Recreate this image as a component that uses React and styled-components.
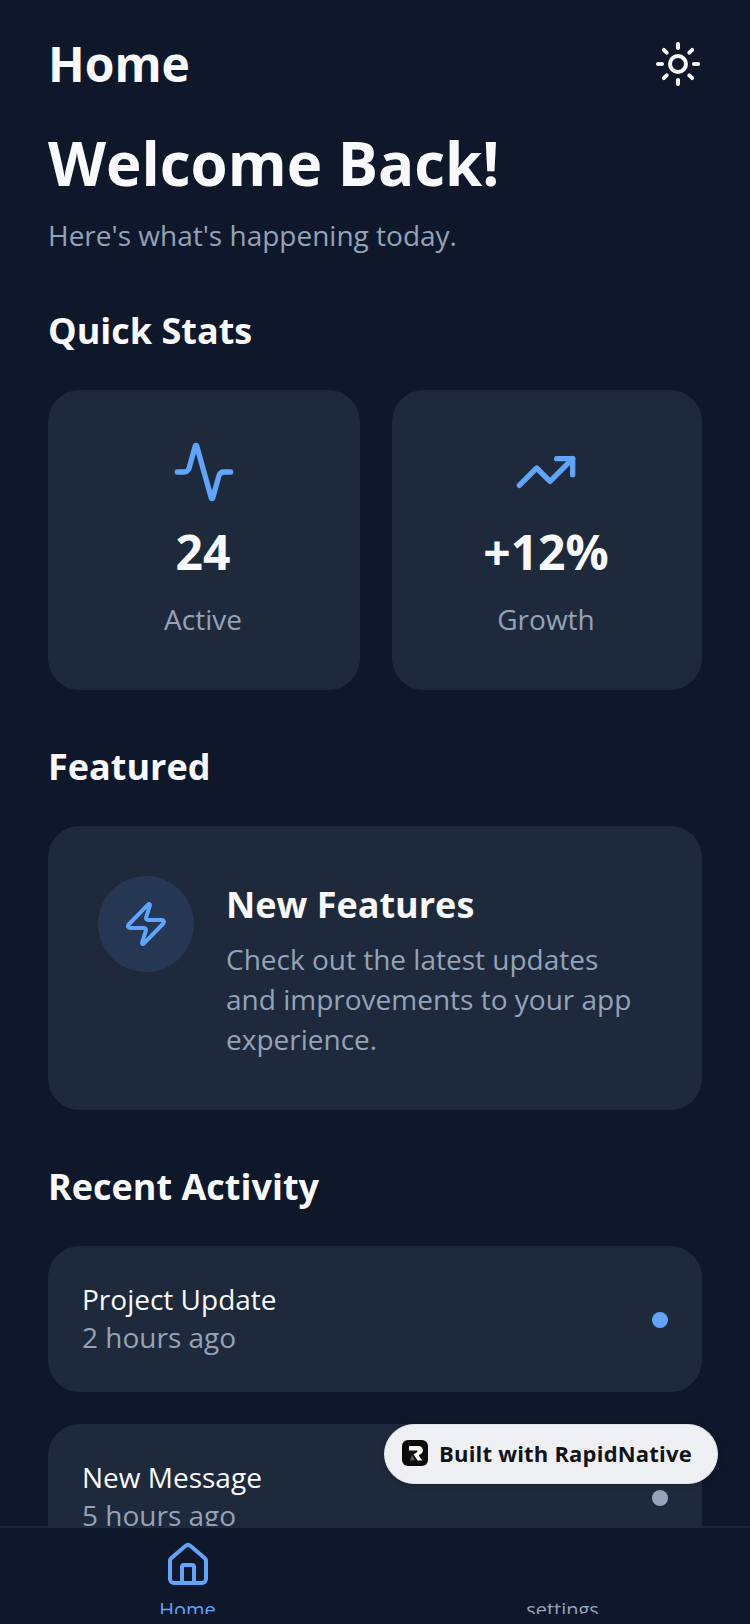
import React from "react";
import styled, { createGlobalStyle } from "styled-components";
import { Sun, Activity, TrendingUp, Zap, House } from "lucide-react";

const Global = createGlobalStyle`
  html, body { margin: 0; padding: 0; background: #0f172a; }
  * { box-sizing: border-box; }
`;

const Screen = styled.div`
  width: 750px;
  height: 1624px;
  position: relative;
  display: flex;
  flex-direction: column;
  overflow: hidden;
  background: #0f172a;
  font-family: "Open Sans", "Noto Sans", sans-serif;
  color: #f8fafc;
`;

const Scroll = styled.main`
  flex: 1;
  min-height: 0;
  overflow: hidden;
`;

const Header = styled.header`
  display: flex;
  justify-content: space-between;
  align-items: center;
  padding: 32px 48px 0;
`;

const PageTitle = styled.h1`
  margin: 0;
  font-size: 48px;
  line-height: 64px;
  font-weight: 700;
`;

const ThemeButton = styled.div`
  display: flex;
  color: #f8fafc;
`;

const Content = styled.div`
  padding: 0 48px;
`;

const Welcome = styled.h2`
  margin: 31px 0 0;
  font-size: 60px;
  line-height: 72px;
  font-weight: 700;
`;

const Sub = styled.p`
  margin: 16px 0 -1px;
  font-size: 28px;
  line-height: 40px;
  color: #94a3b8;
`;

const SectionTitle = styled.h3`
  margin: 49px 0 31px;
  font-size: 36px;
  line-height: 56px;
  font-weight: 700;
`;

const Card = styled.div`
  background: #1e293b;
  border: 2px solid #1e293b;
  border-radius: 32px;
`;

const StatsGrid = styled.div`
  display: grid;
  grid-template-columns: 312px 310px;
  gap: 32px;
`;

const StatCard = styled(Card)`
  display: flex;
  flex-direction: column;
  align-items: center;
  padding: 48px 50px 48px 48px;
  height: 300px;
  color: #60a5fa;
`;

const ActivityIcon = styled(Activity)`
  margin-left: 2px;
`;

const StatValue = styled.div`
  margin-top: 16px;
  font-size: 48px;
  line-height: 64px;
  font-weight: 700;
  color: #f8fafc;
`;

const StatLabel = styled.div`
  margin-top: 15px;
  font-size: 28px;
  line-height: 40px;
  color: #94a3b8;
`;

const FeatureCard = styled(Card)`
  display: flex;
  gap: 32px;
  padding: 48px;
`;

const FeatureIcon = styled.div`
  flex: none;
  width: 96px;
  height: 96px;
  border-radius: 50%;
  display: flex;
  align-items: center;
  justify-content: center;
  background: #253753;
  color: #60a5fa;
`;

const FeatureTitle = styled.div`
  padding-top: 1px;
  font-size: 36px;
  line-height: 56px;
  font-weight: 700;
`;

const FeatureText = styled.div`
  margin: 6px 0 1px;
  font-size: 28px;
  line-height: 40px;
  color: #94a3b8;
`;

const ActivityList = styled.div`
  display: flex;
  flex-direction: column;
  gap: 32px;
`;

const ActivityRow = styled(Card)`
  display: flex;
  align-items: center;
  justify-content: space-between;
  padding: 32px 32px 34px;
`;

const ActivityName = styled.div`
  font-size: 28px;
  line-height: 38px;
`;

const ActivityTime = styled.div`
  font-size: 28px;
  line-height: 38px;
  color: #94a3b8;
`;

const Dot = styled.div`
  width: 16px;
  height: 16px;
  margin-top: 4px;
  border-radius: 50%;
  background: ${(p) => p.$color};
`;

const TabBar = styled.nav`
  flex: none;
  height: 98px;
  display: flex;
  background: #0f172a;
  border-top: 2px solid #1e293b;
`;

const Tab = styled.div`
  flex: 1;
  height: 86px;
  padding-top: 13px;
  display: flex;
  flex-direction: column;
  align-items: center;
  overflow: hidden;
  color: ${(p) => (p.$active ? "#60a5fa" : "#94a3b8")};
`;

const TabIconSlot = styled.div`
  width: 48px;
  height: 48px;
  flex: none;
  display: flex;
`;

const TabLabel = styled.div`
  flex: none;
  font-size: 20px;
  line-height: 28px;
  margin-top: 7px;
`;

const Badge = styled.div`
  position: absolute;
  left: 384px;
  top: 1424px;
  width: 334px;
  height: 60px;
  display: flex;
  align-items: center;
  gap: 11px;
  padding: 0 0 2px 17px;
  border-radius: 30px;
  background: #eef0f3;
  border: 1px solid #dfe3ea;
  box-shadow: 0 2px 6px rgba(0, 0, 0, 0.15);
  color: #111318;
  font-size: 22px;
  font-weight: 700;
  letter-spacing: 0.2px;
  white-space: nowrap;
`;

const LogoMark = () => (
  <svg width="26" height="26" viewBox="0 0 26 26">
    <rect width="26" height="26" rx="6" fill="#0b0b0c" />
    <path d="M7 6h9.5a4.3 4.3 0 0 1 2.4 7.9L16.6 15l3.6 5.5h-4.6L11.6 14.6l3.6-2.6a.8.8 0 0 0-.4-1.4H7z" fill="#fff" />
    <path d="M10 14.5l-2 6h5z" fill="#8a8a8a" opacity="0.6" />
  </svg>
);

export default function App() {
  return (
    <Screen>
      <Global />
      <Scroll>
        <Header>
          <PageTitle>Home</PageTitle>
          <ThemeButton><Sun size={48} /></ThemeButton>
        </Header>
        <Content>
          <Welcome>Welcome Back!</Welcome>
          <Sub>Here's what's happening today.</Sub>

          <SectionTitle>Quick Stats</SectionTitle>
          <StatsGrid>
            <StatCard>
              <ActivityIcon size={64} />
              <StatValue>24</StatValue>
              <StatLabel>Active</StatLabel>
            </StatCard>
            <StatCard>
              <TrendingUp size={64} />
              <StatValue>+12%</StatValue>
              <StatLabel>Growth</StatLabel>
            </StatCard>
          </StatsGrid>

          <SectionTitle>Featured</SectionTitle>
          <FeatureCard>
            <FeatureIcon><Zap size={48} /></FeatureIcon>
            <div>
              <FeatureTitle>New Features</FeatureTitle>
              <FeatureText>Check out the latest updates and improvements to your app experience.</FeatureText>
            </div>
          </FeatureCard>

          <SectionTitle>Recent Activity</SectionTitle>
          <ActivityList>
            <ActivityRow>
              <div>
                <ActivityName>Project Update</ActivityName>
                <ActivityTime>2 hours ago</ActivityTime>
              </div>
              <Dot $color="#60a5fa" />
            </ActivityRow>
            <ActivityRow>
              <div>
                <ActivityName>New Message</ActivityName>
                <ActivityTime>5 hours ago</ActivityTime>
              </div>
              <Dot $color="#94a3b8" />
            </ActivityRow>
          </ActivityList>
        </Content>
      </Scroll>
      <TabBar>
        <Tab $active>
          <TabIconSlot><House size={48} /></TabIconSlot>
          <TabLabel>Home</TabLabel>
        </Tab>
        <Tab>
          <TabIconSlot />
          <TabLabel>settings</TabLabel>
        </Tab>
      </TabBar>
      <Badge>
        <LogoMark />
        Built with RapidNative
      </Badge>
    </Screen>
  );
}
